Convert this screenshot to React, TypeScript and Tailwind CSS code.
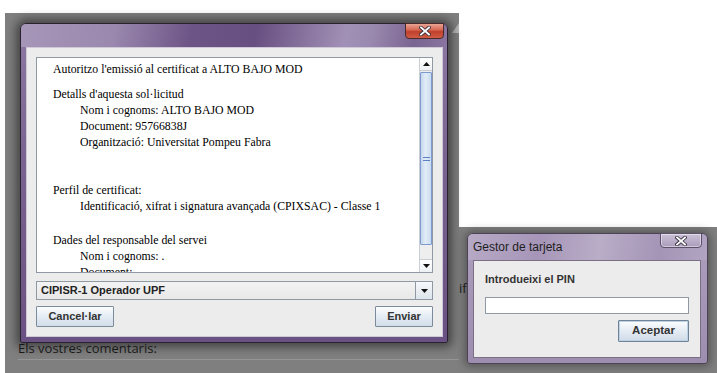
import React from "react";

function XGlyph() {
  return (
    <svg width="12" height="10" viewBox="0 0 12 10">
      <path d="M2 1.5 L10 8.5 M10 1.5 L2 8.5" stroke="#3a3340" strokeWidth="3.6" strokeLinecap="square" fill="none" />
      <path d="M2 1.5 L10 8.5 M10 1.5 L2 8.5" stroke="#ffffff" strokeWidth="1.8" strokeLinecap="square" fill="none" />
    </svg>
  );
}

function TriUp() {
  return (
    <svg width="7" height="4" viewBox="0 0 7 4">
      <path d="M0 4 L3.5 0 L7 4 Z" fill="#111" />
    </svg>
  );
}

function TriDown() {
  return (
    <svg width="7" height="4" viewBox="0 0 7 4">
      <path d="M0 0 L3.5 4 L7 0 Z" fill="#111" />
    </svg>
  );
}

function JButton({ label, w }: { label: string; w: string }) {
  return (
    <div
      className={`${w} h-[21px] border border-[#7b8b9b] rounded-[1px] bg-[linear-gradient(to_bottom,#fcfdfe_0%,#e6edf4_45%,#d2dde9_100%)] flex items-center justify-center text-[11px] font-bold text-[#333] leading-none`}
      style={{ fontFamily: '"Liberation Sans", Arial, sans-serif' }}
    >
      {label}
    </div>
  );
}

export default function App() {
  const serif = { fontFamily: '"Liberation Serif", "Times New Roman", serif' };
  const sans = { fontFamily: '"Liberation Sans", Arial, sans-serif' };
  return (
    <div className="relative w-[717px] h-[373px] bg-white overflow-hidden">
      {/* background page */}
      <div className="absolute left-[5px] top-[13px] w-[454px] h-[360px] bg-[#7f7f7f]">
        <svg className="absolute right-[0px] top-[10px]" width="7" height="10" viewBox="0 0 7 10">
          <path d="M7 0 L7 10 L0 10 Z" fill="#b5b5b5" />
        </svg>
      </div>
      <div className="absolute left-[459px] top-[227px] right-0 bottom-0 bg-[#7f7f7f]" />
      <div
        className="absolute left-[18px] top-[340px] text-[13px] leading-[16px] text-[#1b1b1b]"
        style={{ fontFamily: '"Open Sans", "Liberation Sans", sans-serif' }}
      >
        Els vostres comentaris:
      </div>
      <div className="absolute left-[18px] top-[359px] w-[441px] h-px bg-[#959595]" />
      <div
        className="absolute left-[459px] top-[280px] text-[13px] leading-[16px] text-[#1b1b1b]"
        style={{ fontFamily: '"Open Sans", "Liberation Sans", sans-serif' }}
      >
        if
      </div>

      {/* main dialog */}
      <div className="absolute left-[20px] top-[23px] w-[428px] h-[320px] rounded-t-[6px] rounded-b-[2px] border border-[#2a2230] shadow-[0_0_10px_4px_rgba(20,20,20,0.55)] flex flex-col bg-[linear-gradient(to_bottom,#8d7aa3_0%,#7a6491_40%,#6a5183_100%)]">
        <div className="relative h-[23px] shrink-0 rounded-t-[5px] bg-[linear-gradient(100deg,#a696b8_0%,#9a88ae_22%,#6d5486_40%,#684f81_55%,#a291b6_76%,#9a89af_82%,#7a6491_92%,#8a76a0_100%)]">
          <div className="absolute top-[-1px] right-[3px] w-[39px] h-[16px] rounded-b-[4px] border border-[#4a2a2a] bg-[linear-gradient(to_bottom,#e9a493_0%,#d86b55_40%,#c0402c_55%,#cf5c45_100%)] flex items-center justify-center">
            <XGlyph />
          </div>
        </div>
        <div className="flex-1 flex min-h-0">
          <div className="w-[5px] shrink-0" />
          <div className="w-[417px] h-[290px] bg-[#ececec] border border-[#cfc8d6] p-[9px] flex flex-col">
            {/* text area */}
            <div className="h-[216px] border border-[#8e99a4] bg-white flex">
              <div className="flex-1 overflow-hidden pl-[16px] pt-[3px] text-[11.8px] leading-[16px] text-black" style={serif}>
                <div>Autoritzo l'emissió al certificat a ALTO BAJO MOD</div>
                <div className="mt-[9px]">Detalls d'aquesta sol·licitud</div>
                <div className="pl-[27px]">Nom i cognoms: ALTO BAJO MOD</div>
                <div className="pl-[27px]">Document: 95766838J</div>
                <div className="pl-[27px]">Organització: Universitat Pompeu Fabra</div>
                <div className="mt-[32px]">Perfil de certificat:</div>
                <div className="pl-[27px]">Identificació, xifrat i signatura avançada (CPIXSAC) - Classe 1</div>
                <div className="mt-[18px]">Dades del responsable del servei</div>
                <div className="pl-[27px]">Nom i cognoms: .</div>
                <div className="pl-[27px]">Document: . . . . . . . . .</div>
              </div>
              <div className="w-[13px] shrink-0 border-l border-[#c9ced3] bg-[#eeeeee] flex flex-col">
                <div className="h-[13px] bg-[linear-gradient(to_bottom,#ffffff,#eef1f4)] border-b border-[#c9ced3] flex items-center justify-center">
                  <TriUp />
                </div>
                <div className="mt-[1px] h-[173px] border border-[#7d9bd1] rounded-[1px] bg-[linear-gradient(to_right,#c5d7ec_0%,#e2ecf7_45%,#c9dbef_100%)] flex items-center justify-center">
                  <div className="flex flex-col gap-[2px]">
                    <div className="w-[7px] h-px bg-[#5b7fc2]" />
                    <div className="w-[7px] h-px bg-[#5b7fc2]" />
                  </div>
                </div>
                <div className="flex-1" />
                <div className="h-[13px] bg-[linear-gradient(to_bottom,#ffffff,#eef1f4)] border-t border-[#c9ced3] flex items-center justify-center">
                  <TriDown />
                </div>
              </div>
            </div>
            {/* combo */}
            <div className="mt-[8px] h-[19px] border border-[#8e99a4] bg-[linear-gradient(to_bottom,#f3f3f3,#e8e8e8)] flex">
              <div className="flex-1 flex items-center pl-[4px] text-[11px] font-bold text-[#222]" style={sans}>
                CIPISR-1 Operador UPF
              </div>
              <div className="w-[17px] border-l border-[#8e99a4] bg-[linear-gradient(to_bottom,#f7f9fb,#dde4ec)] flex items-center justify-center">
                <TriDown />
              </div>
            </div>
            {/* buttons */}
            <div className="mt-[6px] flex justify-between">
              <JButton label="Cancel·lar" w="w-[78px]" />
              <JButton label="Enviar" w="w-[58px]" />
            </div>
          </div>
        </div>
        <div className="h-[5px] shrink-0" />
      </div>

      {/* PIN dialog */}
      <div className="absolute left-[467px] top-[233px] w-[241px] h-[131px] rounded-t-[6px] rounded-b-[3px] border border-[#4d4257] shadow-[0_0_8px_2px_rgba(30,30,30,0.45)] flex flex-col bg-[linear-gradient(to_bottom,#ad9fbd,#9d8daf)]">
        <div className="relative h-[26px] shrink-0 rounded-t-[5px] bg-[linear-gradient(100deg,#b7aac6_0%,#a695b8_30%,#b9adc7_55%,#a494b6_80%,#b1a4c1_100%)] flex items-center pl-[5px]">
          <span className="text-[12px] text-[#1e1e1e] leading-none" style={sans}>Gestor de tarjeta</span>
          <div className="absolute top-[-1px] right-[5px] w-[42px] h-[15px] rounded-b-[4px] border border-[#5c506a] bg-[linear-gradient(to_bottom,#cbc1d6,#aa9cbb)] shadow-[inset_0_0_0_1px_rgba(255,255,255,0.45)] flex items-center justify-center">
            <XGlyph />
          </div>
        </div>
        <div className="flex-1 flex min-h-0">
          <div className="w-[5px] shrink-0" />
          <div className="w-[228px] h-[98px] bg-[#ececec] border border-[#7b6f86] pt-[11px] pl-[11px] pr-[11px] flex flex-col">
            <div className="h-[14px] flex items-center text-[11px] font-bold text-[#333]" style={sans}>
              Introdueixi el PIN
            </div>
            <div className="mt-[11px] h-[17px] border border-[#8e99a4] bg-white" />
            <div className="mt-[6px] flex justify-end">
              <div
                className="w-[71px] h-[22px] border border-[#6f8296] rounded-[1px] bg-[linear-gradient(to_bottom,#fcfdfe_0%,#e6edf4_45%,#d0dbe8_100%)] shadow-[inset_0_0_0_1px_#bcd0e6] flex items-center justify-center text-[11.5px] font-bold text-[#333]"
                style={sans}
              >
                Aceptar
              </div>
            </div>
          </div>
        </div>
        <div className="h-[5px] shrink-0" />
      </div>
    </div>
  );
}
